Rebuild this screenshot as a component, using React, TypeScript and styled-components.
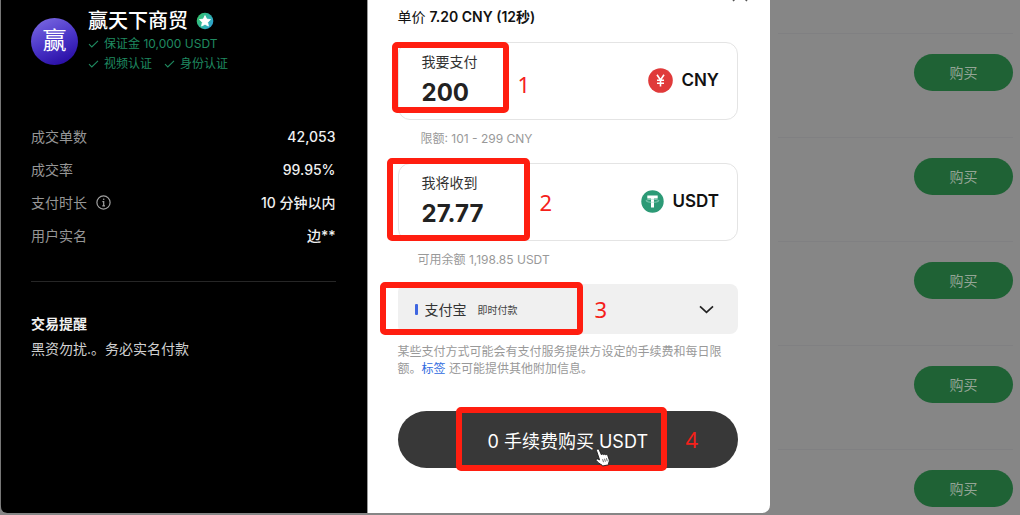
import React, { useState } from "react";
import styled, { createGlobalStyle } from "styled-components";

const GlobalStyle = createGlobalStyle`
  *, *::before, *::after { box-sizing: border-box; }
  body {
    margin: 0;
    background: #868686;
    font-family: Inter, "Noto Sans CJK SC", sans-serif;
    font-size: 14px;
  }
  button, input, select { font: inherit; color: inherit; }
  h1, h2, p, dl, dd, dt, ul { margin: 0; padding: 0; }
`;

const Page = styled.div`
  display: grid;
  grid-template-columns: minmax(0, 77fr) minmax(0, 25fr);
  min-height: 100vh;
  overflow: hidden;
`;

const Dialog = styled.main`
  display: grid;
  grid-template-columns: minmax(0, 367fr) minmax(0, 403fr);
  margin-bottom: 2px;
  border-left: 1px solid #777;
  border-radius: 0 0 8px 8px;
  background: #fff;
`;

/* Seller panel */

const Seller = styled.aside`
  padding: 8px 31px 24px 30px;
  border-right: 1px solid #999;
  border-radius: 0 0 0 6px;
  background: #000;
  color: #f0f0f0;
`;

const SellerHeader = styled.header`
  display: flex;
  align-items: center;
  gap: 10px;
  margin-bottom: 46px;
`;

const Avatar = styled.div`
  display: grid;
  place-items: center;
  flex: none;
  width: 47px;
  height: 47px;
  border-radius: 50%;
  background: linear-gradient(155deg, #7a68e0 5%, #4a35c8 50%, #2408a0 95%);
  color: #fff;
  font-size: 24px;
  line-height: 1;
`;

const SellerName = styled.h1`
  display: flex;
  align-items: center;
  gap: 8px;
  color: #fff;
  font-size: 20px;
  font-weight: 500;
  line-height: 26px;
`;

const Badges = styled.div`
  display: flex;
  gap: 12px;
`;

const Badge = styled.span`
  display: flex;
  align-items: center;
  gap: 5px;
  color: #1f8a60;
  font-size: 12px;
  line-height: 20px;
`;

const Stats = styled.dl`
  padding-bottom: 29px;
  border-bottom: 1px solid #262626;
`;

const Stat = styled.div`
  display: flex;
  justify-content: space-between;
  line-height: 33px;

  dt {
    display: flex;
    align-items: center;
    gap: 9px;
    color: #969696;
  }
  dd { font-weight: 500; }
`;

const Reminder = styled.section`
  padding-top: 29px;
  line-height: 25px;

  h2 { font-size: 14px; font-weight: 700; }
  p { color: #d0d0d0; }
`;

/* Purchase form */

const Form = styled.form`
  position: relative;
  display: flex;
  flex-direction: column;
  padding: 7px 32px 24px 30px;
  color: #111;
`;

const CloseButton = styled.button`
  position: absolute;
  top: -14px;
  right: 22px;
  width: 16px;
  height: 16px;
  padding: 0;
  border: 0;
  background: none;
  line-height: 0;
`;

const Price = styled.p`
  margin-bottom: 15px;
  line-height: 20px;

  strong { font-weight: 600; }
`;

const Field = styled.div`
  position: relative;
  display: flex;
  align-items: center;
  justify-content: space-between;
  height: 78px;
  padding: 0 18px 2px 23px;
  border: 1px solid #e4e4e4;
  border-radius: 12px;
`;

const Amount = styled.div`
  display: flex;
  flex-direction: column;
  flex: 1;
  min-width: 0;
  gap: 4px;

  label { color: #333; line-height: 20px; }
  input {
    width: 100%;
    height: 32px;
    padding: 0;
    border: 0;
    outline: 0;
    background: none;
    color: #222;
    font-size: 24px;
    font-weight: 700;
  }
`;

const Currency = styled.span`
  display: flex;
  align-items: center;
  gap: 8px;
  font-size: 17px;
  font-weight: 600;
`;

const Hint = styled.p<{ $indent: number }>`
  margin: 9px 0 14px;
  padding-left: ${(p) => p.$indent}px;
  color: #999;
  font-size: 12px;
  line-height: 20px;
`;

const Method = styled.div`
  position: relative;
  display: grid;
  height: 50px;
  border-radius: 8px;
  background: #f0f0f0;

  select {
    grid-area: 1 / 1;
    width: 100%;
    padding: 0 0 0 27px;
    border: 0;
    border-radius: 8px;
    appearance: none;
    background: none;
    color: #333;
  }
`;

const MethodDetails = styled.div`
  display: flex;
  align-items: center;
  grid-area: 1 / 1;
  padding: 0 24px 0 17px;
  pointer-events: none;
`;

const MethodMark = styled.span`
  width: 3px;
  height: 11px;
  margin-right: 60px;
  border-radius: 1px;
  background: #3f66e0;
`;

const MethodTag = styled.span`
  flex: 1;
  color: #444;
  font-size: 10px;
`;

const Note = styled.p`
  margin: 9px 0 34px;
  padding-right: 8px;
  color: #999;
  font-size: 12px;
  line-height: 17px;

  a { color: #2f6be0; text-decoration: none; }
`;

const SubmitArea = styled.div`
  position: relative;
`;

const Submit = styled.button`
  width: 100%;
  height: 57px;
  border: 0;
  border-radius: 29px;
  background: #383838;
  color: #fff;
  font-size: 18px;
`;

const Pointer = styled.svg`
  position: absolute;
  top: 37px;
  left: 197px;
`;

/* Numbered step markers drawn over the form */

const Frame = styled.span<{ $x: number; $y: number; $w: number; $h: number }>`
  position: absolute;
  left: ${(p) => p.$x}px;
  top: ${(p) => p.$y}px;
  width: ${(p) => p.$w}px;
  height: ${(p) => p.$h}px;
  border: 6px solid #ff1e10;
  border-radius: 5px;
  pointer-events: none;
`;

const StepNumber = styled.span<{ $x: number; $y: number }>`
  position: absolute;
  left: ${(p) => p.$x}px;
  top: ${(p) => p.$y}px;
  color: #f5201a;
  font-family: "Noto Sans", sans-serif;
  font-size: 22px;
  line-height: 24px;
  pointer-events: none;
`;

/* Offer list behind the dialog */

const Offers = styled.ul`
  padding: 33px 7px 0 8px;
  list-style: none;
`;

const Offer = styled.li`
  display: flex;
  justify-content: flex-end;
  padding: 20px 0 46px;
  border-top: 1px solid #808082;

  &:last-child { padding-bottom: 6px; }
`;

const BuyButton = styled.button`
  width: 99px;
  height: 37px;
  padding: 0 0 2px;
  border: 0;
  border-radius: 19px;
  background: #1f6235;
  color: #94a596;
`;

const Check = () => (
  <svg width="11" height="10" viewBox="0 0 11 10" fill="none" stroke="currentColor" strokeWidth="1.1" aria-hidden="true">
    <path d="M1 5.2 3.8 8 10 1.8" />
  </svg>
);

const StarBadge = () => (
  <svg width="18" height="18" viewBox="0 0 18 18" aria-hidden="true">
    <defs>
      <linearGradient id="star-badge" x1="0" y1="0.2" x2="1" y2="0.8">
        <stop offset="0" stopColor="#35c46a" />
        <stop offset="0.5" stopColor="#2fb5a0" />
        <stop offset="1" stopColor="#2f9fd8" />
      </linearGradient>
    </defs>
    <circle cx="9" cy="9" r="8.3" fill="url(#star-badge)" />
    <path d="m9 3.6 1.7 3.5 3.8.5-2.8 2.7.7 3.8L9 12.3l-3.4 1.8.7-3.8-2.8-2.7 3.8-.5z" fill="#fff" stroke="#fff" strokeWidth=".8" strokeLinejoin="round" />
  </svg>
);

const InfoIcon = () => (
  <svg width="15" height="15" viewBox="0 0 15 15" fill="none" stroke="#a0a0a0" strokeWidth="1.2" aria-hidden="true">
    <circle cx="7.5" cy="7.5" r="6.6" />
    <path d="M6.4 6.6h1.3v4.2M6.3 10.9h2.7" />
    <circle cx="7.7" cy="4.3" r=".8" fill="#a0a0a0" stroke="none" />
  </svg>
);

const YuanIcon = () => (
  <svg width="25" height="25" viewBox="0 0 25 25" aria-hidden="true">
    <circle cx="12.5" cy="12.5" r="12.3" fill="#e03a3a" />
    <path d="m9 6.8 3.5 5.2L16 6.8M12.5 12v6.6M9 12.3h7M9 15.2h7" fill="none" stroke="#fff" strokeWidth="1.6" />
  </svg>
);

const TetherIcon = () => (
  <svg width="23" height="23" viewBox="0 0 23 23" aria-hidden="true">
    <circle cx="11.5" cy="11.5" r="11.2" fill="#2c9a76" />
    <path d="M6.3 5.6h10.4v2.8h-3.7v9.2H10V8.4H6.3z" fill="#fff" />
    <ellipse cx="11.5" cy="10.8" rx="6.4" ry="1.5" fill="none" stroke="#a8dccb" strokeWidth=".7" />
  </svg>
);

const sellerStats = [
  { label: "成交单数", value: "42,053" },
  { label: "成交率", value: "99.95%" },
  { label: "支付时长", value: "10 分钟以内", info: true },
  { label: "用户实名", value: "边**" },
];

export default function App() {
  const [pay, setPay] = useState("200");
  const [receive, setReceive] = useState("27.77");

  return (
    <>
      <GlobalStyle />
      <Page>
        <Dialog>
          <Seller>
            <SellerHeader>
              <Avatar>赢</Avatar>
              <div>
                <SellerName>赢天下商贸<StarBadge /></SellerName>
                <Badges><Badge><Check />保证金 10,000 USDT</Badge></Badges>
                <Badges>
                  <Badge><Check />视频认证</Badge>
                  <Badge><Check />身份认证</Badge>
                </Badges>
              </div>
            </SellerHeader>
            <Stats>
              {sellerStats.map((s) => (
                <Stat key={s.label}>
                  <dt>{s.label}{s.info && <InfoIcon />}</dt>
                  <dd>{s.value}</dd>
                </Stat>
              ))}
            </Stats>
            <Reminder>
              <h2>交易提醒</h2>
              <p>黑资勿扰.。务必实名付款</p>
            </Reminder>
          </Seller>

          <Form onSubmit={(e) => e.preventDefault()}>
            <CloseButton type="button" aria-label="关闭">
              <svg width="16" height="16" viewBox="0 0 16 16" stroke="#555" strokeWidth="1.5" aria-hidden="true">
                <path d="m1 1 14 14M15 1 1 15" />
              </svg>
            </CloseButton>
            <Price>单价 <strong>7.20 CNY (12秒)</strong></Price>

            <Field>
              <Amount>
                <label htmlFor="pay">我要支付</label>
                <input id="pay" inputMode="decimal" value={pay} onChange={(e) => setPay(e.target.value)} />
              </Amount>
              <Currency><YuanIcon />CNY</Currency>
              <Frame $x={-7} $y={-1} $w={117} $h={71} />
              <StepNumber $x={119} $y={29}>1</StepNumber>
            </Field>
            <Hint $indent={23}>限额: 101 - 299 CNY</Hint>

            <Field>
              <Amount>
                <label htmlFor="receive">我将收到</label>
                <input id="receive" inputMode="decimal" value={receive} onChange={(e) => setReceive(e.target.value)} />
              </Amount>
              <Currency><TetherIcon />USDT</Currency>
              <Frame $x={-12} $y={-6} $w={143} $h={83} />
              <StepNumber $x={141} $y={26}>2</StepNumber>
            </Field>
            <Hint $indent={20}>可用余额 1,198.85 USDT</Hint>

            <Method>
              <select aria-label="支付方式" defaultValue="alipay">
                <option value="alipay">支付宝</option>
              </select>
              <MethodDetails>
                <MethodMark />
                <MethodTag>即时付款</MethodTag>
                <svg width="15" height="9" viewBox="0 0 15 9" fill="none" stroke="#222" strokeWidth="1.7" aria-hidden="true">
                  <path d="m1 1.3 6.5 6 6.5-6" />
                </svg>
              </MethodDetails>
              <Frame $x={-18} $y={-2} $w={203} $h={53} />
              <StepNumber $x={197} $y={13}>3</StepNumber>
            </Method>
            <Note>
              某些支付方式可能会有支付服务提供方设定的手续费和每日限额。<a href="#tags">标签</a> 还可能提供其他附加信息。
            </Note>

            <SubmitArea>
              <Submit type="submit">0 手续费购买 USDT</Submit>
              <Frame $x={58} $y={-4} $w={211} $h={64} />
              <StepNumber $x={288} $y={16}>4</StepNumber>
              <Pointer width="16" height="19" viewBox="0 0 16 19" aria-hidden="true">
                <path
                  d="M2.3 1.2c1-.5 1.7.1 2.1 1l2 4.6c.2-1 1.7-1.1 2.1-.1.5-.8 1.8-.7 2.1.2.6-.6 1.9-.4 2.2.6l1.3 4c.4 1.4 0 2.6-.6 3.6l.2 1.7-6.2 1.2-.9-1.3c-1.9-.7-3.6-2.3-5.2-4-.9-1 .4-2.3 1.6-1.6l1.6.8L1.6 2.9c-.3-.7-.1-1.4.7-1.7z"
                  fill="#fff" stroke="#1a1a1a" strokeWidth=".9" strokeLinejoin="round"
                />
                <path d="m7.6 11.2.9 3M9.5 10.7l.9 3M11.4 10.2l.9 3" stroke="#444" strokeWidth=".8" />
              </Pointer>
            </SubmitArea>
          </Form>
        </Dialog>

        <Offers>
          {[1, 2, 3, 4, 5].map((id) => (
            <Offer key={id}><BuyButton type="button">购买</BuyButton></Offer>
          ))}
        </Offers>
      </Page>
    </>
  );
}
